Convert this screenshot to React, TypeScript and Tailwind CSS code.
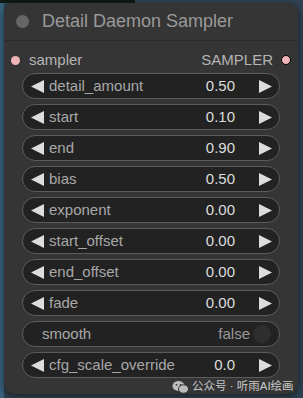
import React from 'react';

const widgets = [
  { name: 'detail_amount', value: '0.50' },
  { name: 'start', value: '0.10' },
  { name: 'end', value: '0.90' },
  { name: 'bias', value: '0.50' },
  { name: 'exponent', value: '0.00' },
  { name: 'start_offset', value: '0.00' },
  { name: 'end_offset', value: '0.00' },
  { name: 'fade', value: '0.00' },
];

const Arrow: React.FC<{ dir: 'left' | 'right' }> = ({ dir }) => (
  <svg width="13" height="13" viewBox="0 0 13 13">
    <polygon points={dir === 'left' ? '13,0 13,13 0,6.5' : '0,0 0,13 13,6.5'} fill="#dddddd" />
  </svg>
);

const NumberWidget: React.FC<{ name: string; value: string }> = ({ name, value }) => (
  <div className="h-[26px] rounded-full bg-[#222222] border border-[#5c5c5c] flex items-center pl-[8px] pr-[7px] text-[15px]">
    <Arrow dir="left" />
    <span className="ml-[5px] text-[#a8a8a8] flex-1">{name}</span>
    <span className="text-[#dddddd] mr-[24px]">{value}</span>
    <Arrow dir="right" />
  </div>
);

const App: React.FC = () => {
  return (
    <div
      className="w-[303px] h-[398px] bg-[#2f4050] relative overflow-hidden"
      style={{ fontFamily: '"Liberation Sans", Arial, "Noto Sans CJK SC", sans-serif' }}
    >
      <div className="absolute left-0 top-0 w-[4px] h-[398px] bg-[#36607c]" />
      <div className="absolute left-0 top-0 w-[135px] h-[3px] bg-[#0f1a12]" />
      <div className="absolute left-[4px] top-[3px] w-[294px] h-[391px] bg-[#353535] rounded-[10px] shadow-[0_2px_6px_rgba(0,0,0,0.5)] flex flex-col">
        {/* Title */}
        <div className="h-[38px] flex items-center pl-[12px] border-b border-[#2b2b2b]">
          <div className="w-[13px] h-[13px] rounded-full bg-[#666666]" />
          <span className="ml-[13px] text-[18px] text-[#999999]">Detail Daemon Sampler</span>
        </div>
        {/* Body */}
        <div className="pt-[9px] px-[18px] flex flex-col">
          <div className="h-[20px] flex items-center justify-between text-[15px] text-[#b4b4b4] -mx-[11px]">
            <div className="flex items-center">
              <div className="w-[9px] h-[9px] rounded-full bg-[#f0b4b8]" />
              <span className="ml-[9px]">sampler</span>
            </div>
            <div className="flex items-center">
              <span>SAMPLER</span>
              <div className="ml-[8px] w-[10px] h-[10px] rounded-full bg-[#f0b4b8] border border-black" />
            </div>
          </div>
          <div className="mt-[3px] flex flex-col gap-[5px]">
            {widgets.map((w) => (
              <NumberWidget key={w.name} name={w.name} value={w.value} />
            ))}
            <div className="h-[26px] rounded-full bg-[#222222] border border-[#5c5c5c] flex items-center pl-[19px] pr-[8px] text-[15px]">
              <span className="text-[#a8a8a8] flex-1">smooth</span>
              <span className="text-[#999999]">false</span>
              <div className="ml-[3px] w-[18px] h-[18px] rounded-full bg-[#2e2e2e]" />
            </div>
            <NumberWidget name="cfg_scale_override" value="0.0" />
          </div>
        </div>
      </div>
      {/* watermark */}
      <div className="absolute left-[172px] top-[378px] flex items-center text-[11.5px] text-[#c8c8c8]">
        <svg width="17" height="14" viewBox="0 0 17 14">
          <ellipse cx="6.5" cy="6" rx="6" ry="5" fill="#bdbdbd" />
          <ellipse cx="11.5" cy="9" rx="5" ry="4.2" fill="#bdbdbd" stroke="#353535" strokeWidth="1" />
          <circle cx="4.5" cy="4.8" r="0.9" fill="#353535" />
          <circle cx="8.5" cy="4.8" r="0.9" fill="#353535" />
        </svg>
        <span className="ml-[3px]">公众号 · 听雨AI绘画</span>
      </div>
    </div>
  );
};

export default App;
